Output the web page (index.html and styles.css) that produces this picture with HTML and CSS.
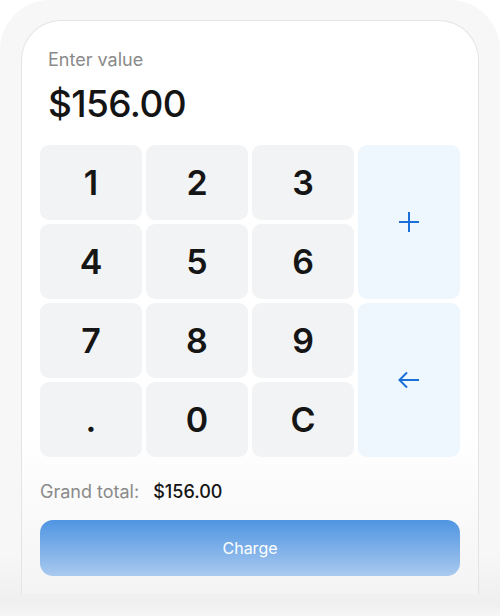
FILE: index.html
```html
<!DOCTYPE html>
<html>
<head>
  <meta name="viewport" content="width=device-width">
  <title>Keypad</title>
  <link rel="stylesheet" href="styles.css">
</head>
<body>
<div class="frame">
  <div class="card">
    <p class="label">Enter value</p>
    <p class="amount">$156.00</p>

    <div class="pad">
      <button class="key">1</button>
      <button class="key">2</button>
      <button class="key">3</button>
      <button class="key op tall">
        <svg width="24" height="24" viewBox="0 0 24 24"><path d="M12 2v20M2 12h20" stroke="#1a6fd8" stroke-width="2" fill="none"/></svg>
      </button>
      <button class="key">4</button>
      <button class="key">5</button>
      <button class="key">6</button>
      <button class="key">7</button>
      <button class="key">8</button>
      <button class="key">9</button>
      <button class="key op tall">
        <svg width="24" height="24" viewBox="0 0 24 24"><path d="M22 12H2.5M10 4.5L2.5 12l7.5 7.5" stroke="#1a6fd8" stroke-width="2" fill="none"/></svg>
      </button>
      <button class="key">.</button>
      <button class="key">0</button>
      <button class="key">C</button>
    </div>

    <div class="total">
      <span class="total-label">Grand total:</span>
      <span class="total-value">$156.00</span>
    </div>

    <button class="charge">Charge</button>
  </div>
</div>
</body>
</html>
```

FILE: styles.css
```css
body {
    margin: 0;
    background: #ffffff;
    font-family: Inter, "Liberation Sans", sans-serif;
}
.frame {
    height: 616px;
    box-sizing: border-box;
    padding: 20px 21px 0;
    background: linear-gradient(#f7f7f7, #f7f7f7 90%, #efefef 98%, #f6f6f6);
    border-radius: 50px 50px 0 0;
}
.card {
    height: 574px;
    box-sizing: border-box;
    padding: 29px 18px 0;
    border: 1px solid #e4e4e4;
    border-bottom: none;
    border-radius: 40px 40px 0 0;
    background: linear-gradient(#ffffff, #ffffff 72%, #f4f4f4);
}
.label {
    margin: 0 0 0 8px;
    font-size: 18px;
    line-height: 20px;
    color: #8a8a8a;
}
.amount {
    margin: 12px 0 0 8px;
    font-size: 37px;
    line-height: 44px;
    font-weight: 500;
    color: #141414;
    letter-spacing: -0.6px;
}
.pad {
    margin-top: 19px;
    display: grid;
    grid-template-columns: repeat(4, 1fr);
    grid-auto-rows: 75px;
    gap: 4px;
}
.key {
    border: none;
    border-radius: 9px;
    background: #f2f3f4;
    font-family: inherit;
    font-size: 34px;
    font-weight: 600;
    color: #151515;
    padding: 0;
}
.op {
    background: #eef6fe;
    grid-column: 4;
    display: flex;
    align-items: center;
    justify-content: center;
}
.tall { grid-row: span 2; }
.total {
    margin: 25px 0 0 0;
    display: flex;
    gap: 14px;
    font-size: 18px;
    line-height: 20px;
}
.total-label { color: #8a8a8a; }
.total-value { color: #151515; font-weight: 500; }
.charge {
    margin-top: 18px;
    width: 100%;
    height: 56px;
    border: none;
    border-radius: 13px;
    background: linear-gradient(#4f95e2, #a9c9ef);
    color: #ffffff;
    font-family: inherit;
    font-size: 16px;
}
```
